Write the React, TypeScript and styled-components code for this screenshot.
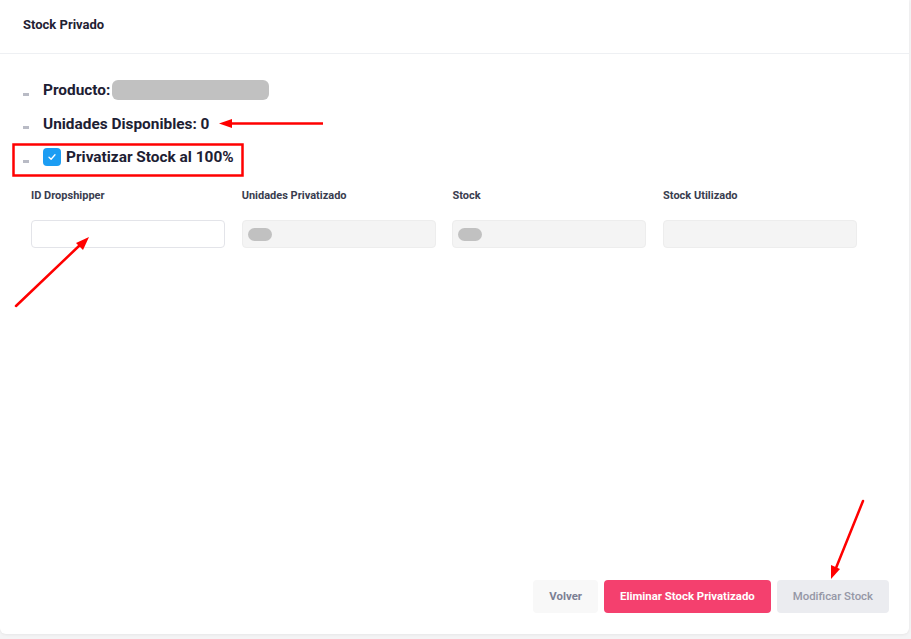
import React from 'react';
import styled, { createGlobalStyle } from 'styled-components';

const GlobalStyle = createGlobalStyle`
  html, body {
    margin: 0;
    padding: 0;
    background: #f4f4f5;
    font-family: Roboto, "Liberation Sans", Arial, sans-serif;
  }
  * { box-sizing: border-box; }
`;

const Page = styled.div`
  position: relative;
  width: 911px;
  height: 639px;
`;

const Card = styled.div`
  width: 909px;
  height: 634px;
  background: #fff;
  border-radius: 0 0 6px 6px;
  box-shadow: 0 1px 3px rgba(0, 0, 0, 0.06);
  display: flex;
  flex-direction: column;
`;

const Header = styled.div`
  height: 54px;
  padding: 17px 23px 0;
  border-bottom: 1px solid #eef0f3;
  font-size: 13px;
  font-weight: 700;
  color: #1f2233;
`;

const Body = styled.div`
  flex: 1;
  padding: 25px 0 0;
`;

const List = styled.ul`
  list-style: none;
  margin: 0;
  padding: 0 0 0 23px;
  display: flex;
  flex-direction: column;
  gap: 11.5px;
`;

const Item = styled.li`
  display: flex;
  align-items: center;
  height: 22px;
  font-size: 15.4px;
  font-weight: 700;
  color: #1d2033;
`;

const Dash = styled.span`
  width: 6px;
  height: 3px;
  background: #b9bbc5;
  margin: 8px 14px 0 0;
  flex-shrink: 0;
`;

const Blurred = styled.span`
  display: inline-block;
  width: 157px;
  height: 20px;
  margin-left: 2px;
  border-radius: 6px;
  background: #c1c1c1;
`;

const Check = styled.span`
  width: 18px;
  height: 18px;
  border-radius: 4px;
  background: #1c9df3;
  display: inline-flex;
  align-items: center;
  justify-content: center;
  margin-right: 5px;
`;

const Grid = styled.div`
  display: grid;
  grid-template-columns: repeat(4, 194px);
  column-gap: 16.7px;
  row-gap: 17px;
  padding: 21px 0 0 31px;
`;

const Label = styled.div`
  font-size: 11px;
  font-weight: 700;
  color: #3a3d4f;
  height: 14px;
`;

const Field = styled.div<{ $disabled?: boolean }>`
  height: 28px;
  border-radius: 4px;
  border: 1px solid ${(p) => (p.$disabled ? '#ededed' : '#e3e4e9')};
  background: ${(p) => (p.$disabled ? '#f4f4f4' : '#fff')};
  display: flex;
  align-items: center;
  padding-left: 5px;
`;

const Pill = styled.span`
  width: 24px;
  height: 13px;
  border-radius: 7px;
  background: #c1c1c1;
`;

const Footer = styled.div`
  display: flex;
  justify-content: flex-end;
  gap: 6px;
  padding: 0 20px 21px;
`;

const Button = styled.button<{ $kind: 'ghost' | 'danger' | 'muted' }>`
  height: 33px;
  border: none;
  border-radius: 4px;
  font-family: inherit;
  font-size: 11.4px;
  padding: 0 16px 1px;
  font-weight: ${(p) => (p.$kind === 'muted' ? 500 : 700)};
  background: ${(p) =>
    p.$kind === 'danger' ? '#f4406e' : p.$kind === 'muted' ? '#ebecf0' : '#f8f8f8'};
  color: ${(p) =>
    p.$kind === 'danger' ? '#fff' : p.$kind === 'muted' ? '#9597a6' : '#7b8094'};
`;

const Overlay = styled.svg`
  position: absolute;
  left: 0;
  top: 0;
  pointer-events: none;
`;

const fields = [
  { label: 'ID Dropshipper', disabled: false, pill: false },
  { label: 'Unidades Privatizado', disabled: true, pill: true },
  { label: 'Stock', disabled: true, pill: true },
  { label: 'Stock Utilizado', disabled: true, pill: false },
];

export default function App() {
  return (
    <Page>
      <GlobalStyle />
      <Card>
        <Header>Stock Privado</Header>
        <Body>
          <List>
            <Item>
              <Dash />
              Producto:<Blurred />
            </Item>
            <Item>
              <Dash />
              Unidades Disponibles: 0
            </Item>
            <Item>
              <Dash />
              <Check>
                <svg width="10" height="10" viewBox="0 0 10 10">
                  <path d="M2 5.2 L4.1 7.2 L8 2.8" fill="none" stroke="#fff" strokeWidth="1.3" strokeLinecap="round" strokeLinejoin="round" />
                </svg>
              </Check>
              Privatizar Stock al 100%
            </Item>
          </List>
          <Grid>
            {fields.map((f) => (
              <Label key={f.label}>{f.label}</Label>
            ))}
            {fields.map((f) => (
              <Field key={f.label} $disabled={f.disabled}>
                {f.pill && <Pill />}
              </Field>
            ))}
          </Grid>
        </Body>
        <Footer>
          <Button $kind="ghost">Volver</Button>
          <Button $kind="danger">Eliminar Stock Privatizado</Button>
          <Button $kind="muted">Modificar Stock</Button>
        </Footer>
      </Card>
      {/* red annotations drawn over the screenshot */}
      <Overlay width="911" height="639" viewBox="0 0 911 639">
        <rect x="13.5" y="144.5" width="229" height="31" fill="none" stroke="#f00" strokeWidth="2.5" />
        <line x1="323" y1="123.5" x2="230" y2="123.5" stroke="#f00" strokeWidth="2.5" />
        <polygon points="219,123.5 232,119 232,128" fill="#f00" />
        <line x1="16" y1="306" x2="80" y2="245" stroke="#f00" strokeWidth="2.5" strokeLinecap="round" />
        <polygon points="89,237 83,250 76,243" fill="#f00" />
        <line x1="863" y1="501" x2="836" y2="568" stroke="#f00" strokeWidth="2.5" strokeLinecap="round" />
        <polygon points="831,579 831,565 840,569" fill="#f00" />
      </Overlay>
    </Page>
  );
}
